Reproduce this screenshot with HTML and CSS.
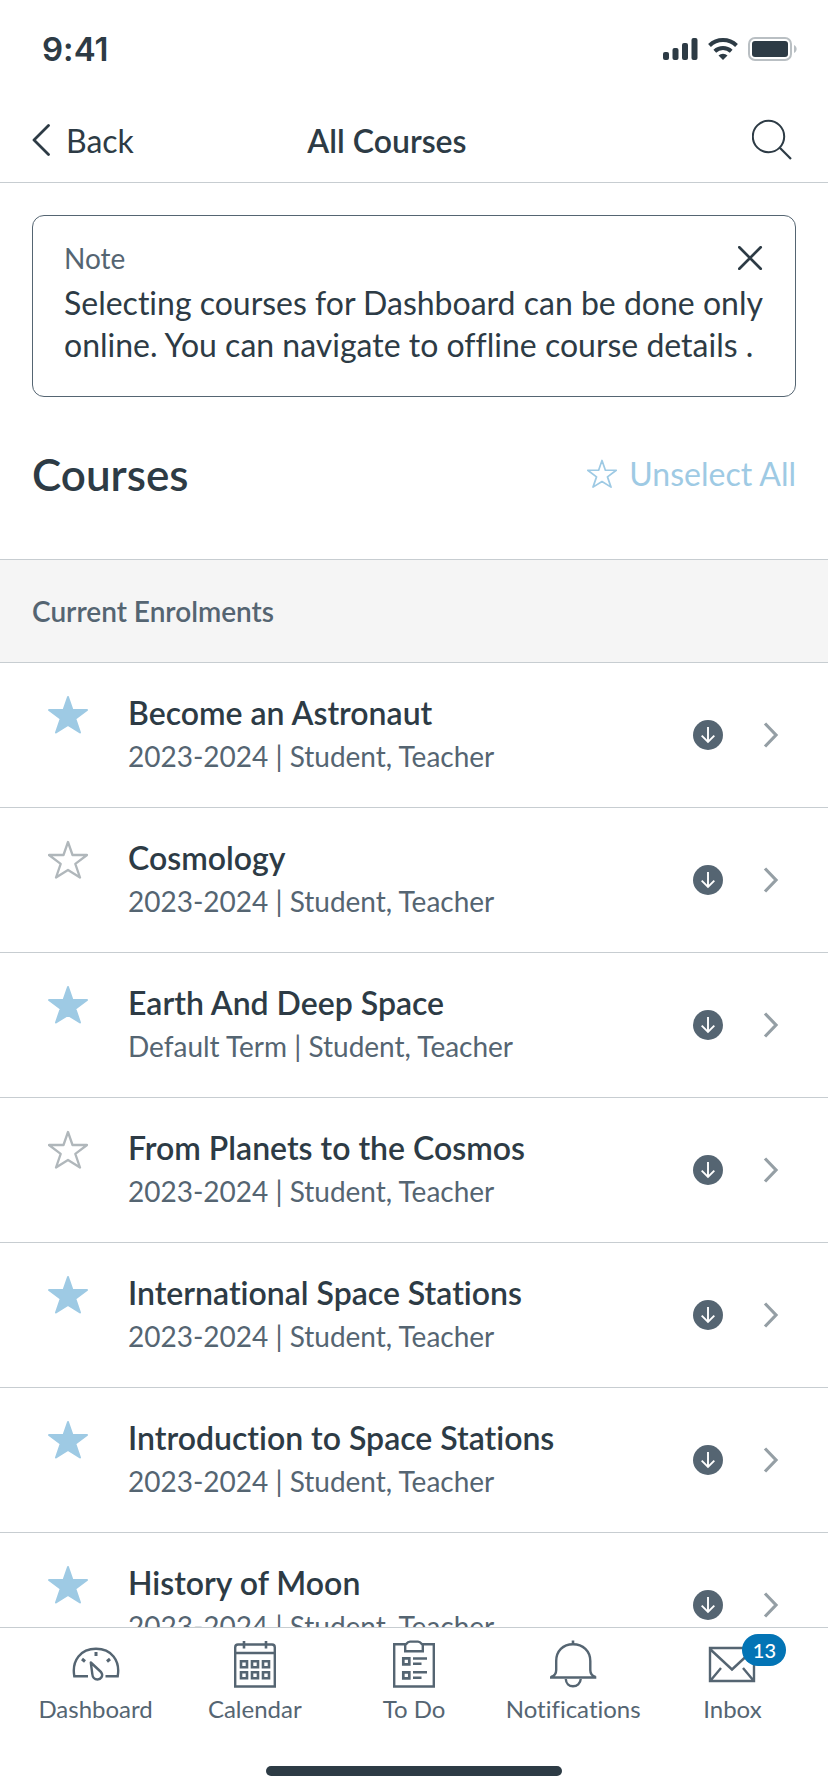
FILE: index.html
```html
<!DOCTYPE html>
<html lang="en">
<head>
  <meta charset="UTF-8" />
  <meta name="viewport" content="width=device-width, initial-scale=1.0" />
  <title>All Courses</title>
  <link rel="stylesheet" href="styles.css">
</head>
<body>
  <!-- Shared icons -->
  <svg class="sprite" aria-hidden="true">
    <symbol id="star-full" viewBox="0 0 40 40">
      <path d="M20 2L24.5 15H39L27.3 23.800L32 37.500L20 30L8 37.500L12.700 23.800L1 15H15.500Z" fill="currentColor" stroke="currentColor" stroke-width="2" stroke-linejoin="round"/>
    </symbol>
    <symbol id="star-line" viewBox="0 0 40 40">
      <path d="M20 2L24.500 15H39L27.300 23.800L32 37.500L20 30L8 37.500L12.700 23.800L1 15H15.500Z" fill="none" stroke="currentColor" stroke-width="2.300" stroke-linejoin="round"/>
    </symbol>
    <symbol id="download" viewBox="0 0 30 30">
      <circle cx="15" cy="15" r="15" fill="#556572"/>
      <path d="M15 7V22M8.700 15.700L15 22L21.300 15.700" fill="none" stroke="#fff" stroke-width="1.900"/>
    </symbol>
    <symbol id="chevron" viewBox="0 0 16 26">
      <path d="M2 1.500L13 13L2 24.500" fill="none" stroke="#959fa5" stroke-width="3.200"/>
    </symbol>
  </svg>

  <div class="app">

    <!-- Status bar -->
    <div class="status-bar">
      <span class="time">9:41</span>
      <div class="status-icons">
        <svg width="35" height="22" viewBox="0 0 35 22" fill="#2d3b45">
          <rect x="0" y="14" width="6" height="8" rx="2"/>
          <rect x="9.500" y="10" width="6" height="12" rx="2"/>
          <rect x="19" y="5" width="6" height="17" rx="2"/>
          <rect x="28.500" y="0" width="6" height="22" rx="2"/>
        </svg>
        <svg width="30" height="22" viewBox="0 0 30 22">
          <path d="M1.500 7.500A19.500 19.500 0 0 1 28.500 7.500" fill="none" stroke="#2d3b45" stroke-width="4"/>
          <path d="M6.800 13.200A12 12 0 0 1 23.200 13.200" fill="none" stroke="#2d3b45" stroke-width="4"/>
          <path d="M10.500 17.500A6.500 6.500 0 0 1 19.500 17.500L15 22Z" fill="#2d3b45"/>
        </svg>
        <svg width="49" height="24" viewBox="0 0 49 24">
          <rect x="1" y="1" width="42" height="22" rx="6" fill="none" stroke="#b9bfc3" stroke-width="2"/>
          <rect x="4" y="4" width="36" height="16" rx="3" fill="#2d3b45"/>
          <path d="M46 8C49.500 9.500 49.500 14.500 46 16Z" fill="#b9bfc3"/>
        </svg>
      </div>
    </div>

    <!-- Nav bar -->
    <header class="nav-bar">
      <button class="back">
        <svg width="18" height="32" viewBox="0 0 18 32"><path d="M16.500 1.500L2 16L16.500 30.500" fill="none" stroke="currentColor" stroke-width="2.800" stroke-linecap="round" stroke-linejoin="round"/></svg>
        Back
      </button>
      <h1 class="nav-title">All Courses</h1>
      <button class="search" aria-label="Search">
        <svg width="40" height="42" viewBox="0 0 40 42"><circle cx="16.500" cy="17.500" r="15.700" fill="none" stroke="currentColor" stroke-width="2"/><path d="M27.800 28.800L39 40" stroke="currentColor" stroke-width="2.200"/></svg>
      </button>
    </header>

    <main class="content">
      <section class="note">
        <div class="note-head">
          <span>Note</span>
          <button class="close" aria-label="Close">
            <svg width="26" height="24" viewBox="0 0 26 24"><path d="M1.300 1.300L22.700 22.700M22.700 1.300L1.300 22.700" stroke="currentColor" stroke-width="2.700" stroke-linecap="round"/></svg>
          </button>
        </div>
        <p class="note-text">Selecting courses for Dashboard can be done only online. You can navigate to offline course details .</p>
      </section>

      <div class="heading">
        <h2>Courses</h2>
        <button class="unselect">
          <svg width="30" height="30"><use href="#star-line"/></svg>
          Unselect All
        </button>
      </div>

      <h3 class="section-title">Current Enrolments</h3>

      <ul class="courses">
        <li class="course">
          <button class="star on" aria-label="Unselect"><svg width="40" height="40"><use href="#star-full"/></svg></button>
          <a href="#" class="course-link">
            <span class="course-info"><span class="course-name">Become an Astronaut</span><span class="course-term">2023-2024 | Student, Teacher</span></span>
            <svg width="30" height="30"><use href="#download"/></svg>
            <svg width="16" height="26"><use href="#chevron"/></svg>
          </a>
        </li>
        <li class="course">
          <button class="star" aria-label="Select"><svg width="40" height="40"><use href="#star-line"/></svg></button>
          <a href="#" class="course-link">
            <span class="course-info"><span class="course-name">Cosmology</span><span class="course-term">2023-2024 | Student, Teacher</span></span>
            <svg width="30" height="30"><use href="#download"/></svg>
            <svg width="16" height="26"><use href="#chevron"/></svg>
          </a>
        </li>
        <li class="course">
          <button class="star on" aria-label="Unselect"><svg width="40" height="40"><use href="#star-full"/></svg></button>
          <a href="#" class="course-link">
            <span class="course-info"><span class="course-name">Earth And Deep Space</span><span class="course-term">Default Term | Student, Teacher</span></span>
            <svg width="30" height="30"><use href="#download"/></svg>
            <svg width="16" height="26"><use href="#chevron"/></svg>
          </a>
        </li>
        <li class="course">
          <button class="star" aria-label="Select"><svg width="40" height="40"><use href="#star-line"/></svg></button>
          <a href="#" class="course-link">
            <span class="course-info"><span class="course-name">From Planets to the Cosmos</span><span class="course-term">2023-2024 | Student, Teacher</span></span>
            <svg width="30" height="30"><use href="#download"/></svg>
            <svg width="16" height="26"><use href="#chevron"/></svg>
          </a>
        </li>
        <li class="course">
          <button class="star on" aria-label="Unselect"><svg width="40" height="40"><use href="#star-full"/></svg></button>
          <a href="#" class="course-link">
            <span class="course-info"><span class="course-name">International Space Stations</span><span class="course-term">2023-2024 | Student, Teacher</span></span>
            <svg width="30" height="30"><use href="#download"/></svg>
            <svg width="16" height="26"><use href="#chevron"/></svg>
          </a>
        </li>
        <li class="course">
          <button class="star on" aria-label="Unselect"><svg width="40" height="40"><use href="#star-full"/></svg></button>
          <a href="#" class="course-link">
            <span class="course-info"><span class="course-name">Introduction to Space Stations</span><span class="course-term">2023-2024 | Student, Teacher</span></span>
            <svg width="30" height="30"><use href="#download"/></svg>
            <svg width="16" height="26"><use href="#chevron"/></svg>
          </a>
        </li>
        <li class="course">
          <button class="star on" aria-label="Unselect"><svg width="40" height="40"><use href="#star-full"/></svg></button>
          <a href="#" class="course-link">
            <span class="course-info"><span class="course-name">History of Moon</span><span class="course-term">2023-2024 | Student, Teacher</span></span>
            <svg width="30" height="30"><use href="#download"/></svg>
            <svg width="16" height="26"><use href="#chevron"/></svg>
          </a>
        </li>
      </ul>
    </main>

    <!-- Tab bar -->
    <footer class="tab-bar">
      <nav class="tabs">
        <a href="#" class="tab">
          <svg class="tab-icon" viewBox="0 0 48 48">
            <path d="M16 36.300H2.300C-.500 20 9 8.700 24 8.700S48.500 20 45.700 36.300H33.500"/>
            <path d="M24 12V16" stroke-width="3"/>
            <path d="M10 19L13 21.500M38 19L35 21.500" stroke-width="3"/>
            <path d="M18.800 22.500L29 32C32 36 28.500 39.500 25.500 39.500S20.500 37 20.300 34Z" stroke-linejoin="round"/>
          </svg>
          Dashboard
        </a>
        <a href="#" class="tab">
          <svg class="tab-icon" viewBox="0 0 48 48">
            <path d="M4.200 46.500V7.500Q4.200 4.500 7 4.500H41Q43.800 4.500 43.800 7.500V46.500ZM4.200 13H43.800"/>
            <path d="M13 1V8.500M35 1V8.500" stroke-width="2.600"/>
            <path d="M10 21.300H16V27.300H10ZM21 21.300H27V27.300H21ZM32 21.300H38V27.300H32ZM10 32.300H16V38.300H10ZM21 32.300H27V38.300H21ZM32 32.300H38V38.300H32Z" stroke-width="2.600"/>
          </svg>
          Calendar
        </a>
        <a href="#" class="tab">
          <svg class="tab-icon" viewBox="0 0 48 48">
            <path d="M15 4.300H4.200V46.500H43.800V4.300H33"/>
            <path d="M15.200 11.300V5Q15.200 4 16.200 4Q18 1.600 20 1.600H28Q30 1.600 31.800 4Q32.800 4 32.800 5V11.300Z"/>
            <path d="M13.300 18.300H19.300V24.300H13.300ZM13.300 32.300H19.300V38.300H13.300Z" stroke-width="2.700"/>
            <path d="M23 18.500H37M23 23.800H31.500M23 32.300H37M23 37.700H31.500" stroke-width="2.400"/>
          </svg>
          To Do
        </a>
        <a href="#" class="tab">
          <svg class="tab-icon" viewBox="0 0 48 48">
            <path d="M24 .5V4" stroke-width="2.600"/>
            <path d="M1 37.500H47.300M2 37C5.500 36 7.200 34 7.200 30V21C7.200 11 14 4.200 24 4.200S41.300 11 41.300 21V30C41.300 34 43 36 46.500 37"/>
            <path d="M16.800 39C17 43.500 20 46.200 24 46.200S31.500 43.500 31.700 39"/>
          </svg>
          Notifications
        </a>
        <a href="#" class="tab">
          <span class="icon-wrap">
            <svg class="tab-icon" viewBox="0 0 48 48">
              <path d="M2 8H46V41H2ZM2.500 9.500L24 29.500L45.500 9.500M3 40L13 28M45 40L35 28"/>
            </svg>
            <span class="badge">13</span>
          </span>
          Inbox
        </a>
      </nav>
      <div class="home-indicator"></div>
    </footer>
  </div>
</body>
</html>
```

FILE: styles.css
```css
:root {
  --ink: #2d3b45;
  --muted: #556572;
  --line: #c7cdd1;
  --star: #9ecae4;
  --badge: #0374b5;
}

* {
  box-sizing: border-box;
  margin: 0;
  padding: 0;
}

body {
  background-color: #fff;
  color: var(--ink);
  font-family: Lato, "Liberation Sans", sans-serif;
  font-size: 32px;
  font-variant-ligatures: none;
}

button {
  border: none;
  background: none;
  color: inherit;
  font: inherit;
  cursor: pointer;
}

a {
  color: inherit;
  text-decoration: none;
}

svg {
  display: block;
  flex-shrink: 0;
}

.sprite {
  position: absolute;
  width: 0;
  height: 0;
}

.app {
  display: flex;
  flex-direction: column;
  height: 100vh;
}

/* Status bar */
.status-bar {
  display: flex;
  justify-content: space-between;
  align-items: center;
  height: 98px;
  padding: 0 31px 0 42px;
}

.time {
  font-family: Inter, "Liberation Sans", sans-serif;
  font-size: 33px;
  font-weight: 600;
}

.status-icons {
  display: flex;
  align-items: center;
  gap: 10px;
}

/* Nav bar */
.nav-bar {
  display: grid;
  grid-template-columns: 11fr auto 13fr;
  align-items: center;
  height: 85px;
  padding: 0 36px 0 32px;
  border-bottom: 1px solid var(--line);
}

.back {
  display: flex;
  align-items: center;
  justify-self: start;
  gap: 16px;
}

.nav-title {
  font-size: 32px;
  font-weight: 600;
}

.search {
  justify-self: end;
}

/* Content */
.content {
  flex: 1;
  min-height: 0;
  overflow-y: auto;
  scrollbar-width: none;
}

.note {
  margin: 32px 32px 0;
  padding: 22px 31px 30px;
  border: 1px solid var(--muted);
  border-radius: 12px;
}

.note-head {
  display: flex;
  justify-content: space-between;
  align-items: center;
  margin-bottom: 4px;
  color: var(--muted);
  font-size: 28px;
  line-height: 40px;
}

.close {
  color: var(--ink);
}

.note-text {
  line-height: 42px;
}

.heading {
  display: flex;
  justify-content: space-between;
  align-items: center;
  padding: 51px 32px 59px;
  line-height: 52px;
}

.heading h2 {
  font-size: 44px;
  font-weight: 600;
}

.unselect {
  display: flex;
  align-items: center;
  gap: 12px;
  color: var(--star);
}

.section-title {
  padding: 30px 32px;
  border-top: 1px solid var(--line);
  border-bottom: 1px solid var(--line);
  background-color: #f5f5f5;
  color: var(--muted);
  font-size: 28px;
  font-weight: 600;
  line-height: 42px;
}

.courses {
  list-style: none;
}

.course {
  display: flex;
  align-items: flex-start;
  gap: 40px;
  padding-left: 48px;
  border-bottom: 1px solid var(--line);
}

.star {
  padding-top: 32px;
  color: #b0b7bb;
}

.star.on {
  color: var(--star);
}

.course-link {
  display: flex;
  flex: 1;
  align-items: center;
  gap: 40px;
  padding-right: 49px;
}

.course-info {
  display: flex;
  flex: 1;
  flex-direction: column;
  padding: 28px 0 30px;
}

.course-name {
  font-weight: 600;
  line-height: 44px;
}

.course-term {
  color: var(--muted);
  font-size: 28px;
  line-height: 42px;
}

/* Tab bar */
.tab-bar {
  padding: 12px 16px 16px;
  border-top: 1px solid var(--line);
  background-color: #fff;
}

.tabs {
  display: flex;
  margin-bottom: 41px;
}

.tab {
  display: flex;
  flex: 1 1 0;
  flex-direction: column;
  align-items: center;
  gap: 5px;
  color: var(--muted);
  font-size: 24px;
  line-height: 32px;
}

.tab-icon {
  width: 48px;
  height: 48px;
  fill: none;
  stroke: currentColor;
  stroke-width: 2.4;
}

.icon-wrap {
  position: relative;
}

.badge {
  position: absolute;
  top: -6px;
  left: 34px;
  min-width: 44px;
  padding: 0 10px;
  border-radius: 16px;
  background-color: var(--badge);
  color: #fff;
  font-size: 20px;
  font-weight: 500;
  text-align: center;
}

.home-indicator {
  width: 296px;
  height: 10px;
  margin: 0 auto;
  border-radius: 5px;
  background-color: var(--ink);
}
```
